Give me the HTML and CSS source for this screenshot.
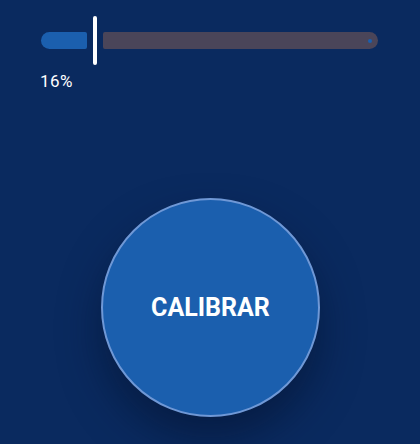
FILE: index.html
```html
<!DOCTYPE html>
<html lang="es">
<head>
  <meta charset="UTF-8">
  <meta name="viewport" content="width=device-width, initial-scale=1.0">
  <title>Calibrar</title>
  <link rel="stylesheet" href="styles.css">
</head>
<body>
  <div class="screen">
    <div class="slider">
      <div class="track-active" style="width: 46px"></div>
      <div class="thumb"></div>
      <div class="track-inactive">
        <span class="stop-dot"></span>
      </div>
    </div>
    <div class="value">16%</div>

    <div class="button-area">
      <button class="calibrate-button">CALIBRAR</button>
    </div>
  </div>
</body>
</html>
```

FILE: styles.css
```css
body {
  margin: 0;
  background: #0a2a5f;
  font-family: Roboto, "Noto Sans", sans-serif;
  color: #fff;
}

.screen {
  width: 420px;
  height: 444px;
  overflow: hidden;
  display: flex;
  flex-direction: column;
}

.slider {
  display: flex;
  align-items: center;
  height: 49px;
  margin: 16px 42px 0 41px;
  gap: 6px;
}

.track-active {
  height: 17px;
  background: #1b5fae;
  border-radius: 9px 2px 2px 9px;
  flex-shrink: 0;
}

.thumb {
  width: 4px;
  height: 49px;
  background: #fff;
  border-radius: 2px;
  flex-shrink: 0;
}

.track-inactive {
  flex: 1;
  height: 17px;
  background: #4a4559;
  border-radius: 2px 9px 9px 2px;
  display: flex;
  align-items: center;
  justify-content: flex-end;
  padding-right: 6px;
}

.stop-dot {
  width: 4px;
  height: 4px;
  border-radius: 50%;
  background: #1b5fae;
}

.value {
  margin: 5px 0 0 40px;
  font-size: 17px;
  font-weight: 400;
  letter-spacing: 0.5px;
  line-height: 22px;
}

.button-area {
  display: flex;
  justify-content: center;
  margin-top: 106px;
  padding-left: 1px;
}

.calibrate-button {
  width: 219px;
  height: 219px;
  border-radius: 50%;
  border: 2px solid #6f98d6;
  background: #1b5fae;
  color: #fff;
  font-family: Roboto, "Noto Sans", sans-serif;
  font-size: 25px;
  font-weight: 700;
  box-shadow: 0 22px 40px rgba(3, 18, 48, 0.55);
  cursor: pointer;
}
```
